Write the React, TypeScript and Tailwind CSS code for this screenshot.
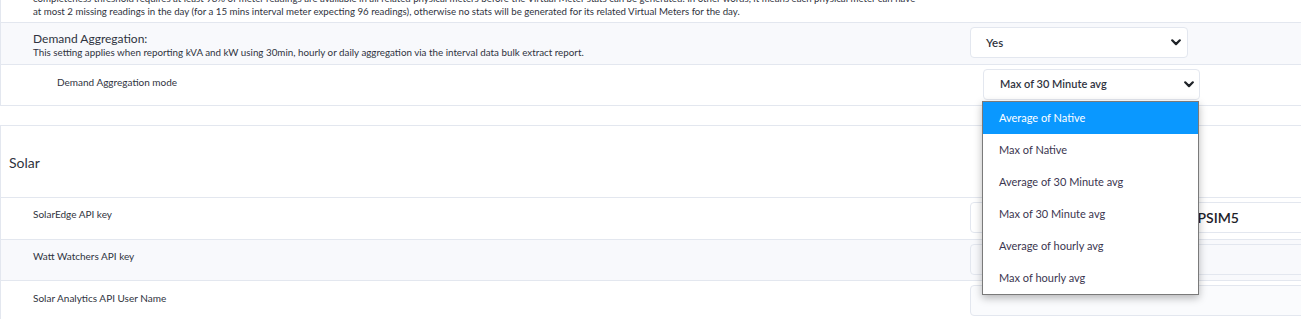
import React from "react";

const Chevron = () => (
  <svg width="10" height="7" viewBox="0 0 10 7" className="shrink-0">
    <path d="M1.2 1.3 L5 5.1 L8.8 1.3" fill="none" stroke="#1f2328" strokeWidth="2.2" strokeLinecap="round" strokeLinejoin="round" />
  </svg>
);

const options = [
  "Average of Native",
  "Max of Native",
  "Average of 30 Minute avg",
  "Max of 30 Minute avg",
  "Average of hourly avg",
  "Max of hourly avg",
];

export default function App() {
  return (
    <div
      className="relative w-[1301px] h-[319px] overflow-hidden bg-white text-[#2f3340]"
      style={{ fontFamily: "Lato, 'Open Sans', sans-serif" }}
    >
      <div className="w-[1360px]">
        {/* Panel 1 */}
        <div className="-mt-[9px] border border-[#e3e7ef]">
          <div className="border-b border-[#e3e7ef] pl-[32px] pb-[4px] text-[9.7px] leading-[13px]">
            <div>
              completeness threshold requires at least 98% of meter readings are available in all related physical meters before the Virtual Meter stats can be generated. In other words, it means each physical meter can have
            </div>
            <div>
              at most 2 missing readings in the day (for a 15 mins interval meter expecting 96 readings), otherwise no stats will be generated for its related Virtual Meters for the day.
            </div>
          </div>
          <div className="flex h-[42px] border-b border-[#e3e7ef] bg-[#f8f9fc] pl-[32px]">
            <div className="w-[937px] shrink-0 pt-[8px]">
              <div className="text-[12px] leading-[15px]">Demand Aggregation:</div>
              <div className="text-[9.8px] leading-[13px]">
                This setting applies when reporting kVA and kW using 30min, hourly or daily aggregation via the interval data bulk extract report.
              </div>
            </div>
            <div className="mt-[4px] flex h-[31px] w-[218px] shrink-0 items-center justify-between rounded-[4px] border border-[#e3e7ef] bg-white pl-[15px] pr-[6px] text-[11.5px] font-semibold">
              <span>Yes</span>
              <Chevron />
            </div>
          </div>
          <div className="flex h-[40px] pl-[56px]">
            <div className="w-[926px] shrink-0 pt-[10px] text-[10px] leading-[14px]">Demand Aggregation mode</div>
            <div className="mt-[4px] flex h-[31px] w-[217px] shrink-0 items-center justify-between rounded-[4px] border border-[#e3e7ef] bg-white pl-[16px] pr-[5px] text-[11px] font-semibold">
              <span>Max of 30 Minute avg</span>
              <Chevron />
            </div>
          </div>
        </div>

        {/* Panel 2 */}
        <div className="mt-[19px] border border-[#e3e7ef]">
          <div className="flex h-[72px] items-center border-b border-[#e3e7ef] pl-[8px] pt-[2px] text-[14px]">
            Solar
          </div>
          <div className="flex h-[42px] border-b border-[#e3e7ef] pl-[32px]">
            <div className="w-[937px] shrink-0 pt-[9px] text-[10px] leading-[14px]">SolarEdge API key</div>
            <div className="mt-[4px] flex h-[31px] w-[400px] shrink-0 items-center rounded-[4px] border border-[#e3e7ef] bg-white pl-[15px]">
              <span className="flex w-[253px] justify-end overflow-hidden whitespace-nowrap text-[14px] font-semibold text-[#1d2129]">
                7F2KQW9LZ0RX4HNV1TE8D3PSIM5
              </span>
            </div>
          </div>
          <div className="flex h-[41px] border-b border-[#e3e7ef] bg-[#f8f9fc] pl-[32px]">
            <div className="w-[937px] shrink-0 pt-[9px] text-[10px] leading-[14px]">Watt Watchers API key</div>
            <div className="mt-[4px] h-[31px] w-[400px] shrink-0 rounded-[4px] border border-[#e3e7ef] bg-[#f8f9fc]" />
          </div>
          <div className="flex h-[41px] pl-[32px]">
            <div className="w-[937px] shrink-0 pt-[10px] text-[10px] leading-[14px]">Solar Analytics API User Name</div>
            <div className="mt-[4px] h-[31px] w-[400px] shrink-0 rounded-[4px] border border-[#e3e7ef] bg-[#fafbfd]" />
          </div>
        </div>
      </div>

      {/* Dropdown list */}
      <div className="absolute left-[982px] top-[101px] w-[217px] border border-[#7a7a7a] bg-white shadow-[0_3px_8px_rgba(0,0,0,0.28)]">
        {options.map((o, i) => (
          <div
            key={o}
            className={
              "flex h-[32px] items-center pl-[16px] text-[11px] " +
              (i === 0 ? "bg-[#0a98ff] text-white" : "text-[#3b3650]")
            }
          >
            {o}
          </div>
        ))}
      </div>
    </div>
  );
}
